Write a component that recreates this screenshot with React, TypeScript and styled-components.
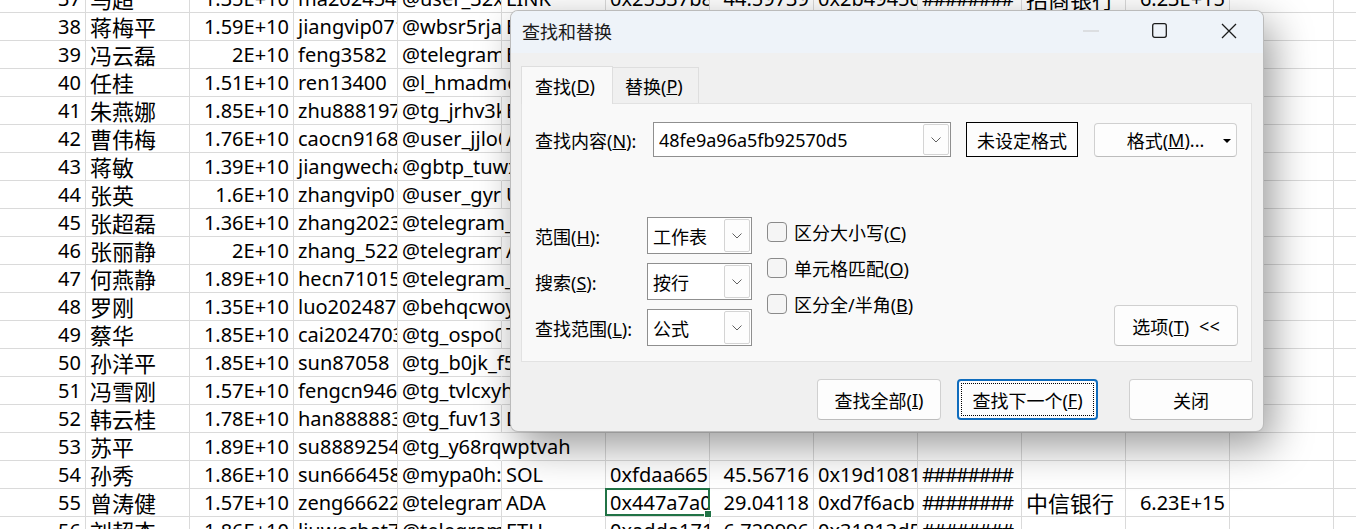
import styled, { createGlobalStyle, css } from "styled-components";

const GlobalStyle = createGlobalStyle`
  html, body {
    margin: 0;
    padding: 0;
    background: #fff;
    overflow: hidden;
  }
  * {
    box-sizing: border-box;
  }
`;

const SHEET_FONT = `"Noto Sans", "Noto Sans CJK SC", sans-serif`;
const UI_FONT = `"Noto Sans", "Noto Sans CJK SC", sans-serif`;

// column alignment / script of the worksheet, A..N
const RIGHT_COLS = [0, 2, 7, 11];
const CJK_COLS = [1, 10];
const HASH_COL = 9;

const ROWS: string[][] = [
  ["37", "马超", "1.35E+10", "ma2024546", "@user_32xm", "LINK", "0x25337b8e", "44.59739", "0x2b4945c1", "########", "招商银行", "6.23E+15"],
  ["38", "蒋梅平", "1.59E+10", "jiangvip0712", "@wbsr5rjab", "ETH", "0x9c1f2a7d", "12.80451", "0x5e8a0c3f", "########", "工商银行", "6.22E+15"],
  ["39", "冯云磊", "2E+10", "feng3582", "@telegram_fy", "BTC", "0x7a03be19", "3.518042", "0x0d6f21ab", "########", "建设银行", "6.22E+15"],
  ["40", "任桂", "1.51E+10", "ren13400", "@l_hmadmqz", "", "0x41cc90e2", "27.33105", "0x8b27fd04", "########", "农业银行", "6.23E+15"],
  ["41", "朱燕娜", "1.85E+10", "zhu8881979", "@tg_jrhv3kp", "ETH", "0x6e2d7b51", "8.904127", "0x3f91a6c8", "########", "中国银行", "6.21E+15"],
  ["42", "曹伟梅", "1.76E+10", "caocn91688", "@user_jjlo0x", "ADA", "0xb5f0c7a3", "31.60287", "0x27de5b90", "########", "交通银行", "6.22E+15"],
  ["43", "蒋敏", "1.39E+10", "jiangwechat", "@gbtp_tuwx", "", "0x0c8e4f6d", "19.45072", "0xa61b3e27", "########", "招商银行", "6.23E+15"],
  ["44", "张英", "1.6E+10", "zhangvip01", "@user_gyr", "USDT", "0x93a7d215", "40.12986", "0x5c04e8bf", "########", "工商银行", "6.22E+15"],
  ["45", "张超磊", "1.36E+10", "zhang2023x", "@telegram_zc", "", "0x2f6b91c0", "5.847301", "0xe39a7d42", "########", "建设银行", "6.22E+15"],
  ["46", "张丽静", "2E+10", "zhang_5221", "@telegram", "ADA", "0xd41e08a9", "22.96514", "0x18c5f3e6", "########", "中信银行", "6.23E+15"],
  ["47", "何燕静", "1.89E+10", "hecn710159", "@telegram_hy", "", "0x5b7f2c38", "36.07742", "0x74e0a9d1", "########", "农业银行", "6.23E+15"],
  ["48", "罗刚", "1.35E+10", "luo202487", "@behqcwoy", "", "0x8e19a4f7", "14.38265", "0x0b6c2d95", "########", "中国银行", "6.21E+15"],
  ["49", "蔡华", "1.85E+10", "cai2024703", "@tg_ospo0e", "TRX", "0xc2d65e1b", "9.271638", "0x6a8f0b34", "########", "交通银行", "6.22E+15"],
  ["50", "孙洋平", "1.85E+10", "sun87058", "@tg_b0jk_f5m", "", "0x17ab4c9e", "48.91520", "0x9d3e72a0", "########", "招商银行", "6.23E+15"],
  ["51", "冯雪刚", "1.57E+10", "fengcn946", "@tg_tvlcxyhq", "", "0xf08c3d62", "2.645098", "0x41b7e5c9", "########", "工商银行", "6.22E+15"],
  ["52", "韩云桂", "1.78E+10", "han8888833", "@tg_fuv13", "DOT", "0x6d94b0a5", "17.52863", "0xc85f1e07", "########", "建设银行", "6.22E+15"],
  ["53", "苏平", "1.89E+10", "su8889254", "@tg_y68rqwptvah", "", "", "", "", "", "", ""],
  ["54", "孙秀", "1.86E+10", "sun6664588", "@mypa0h:s", "SOL", "0xfdaa665", "45.56716", "0x19d1081a", "########", "", ""],
  ["55", "曾涛健", "1.57E+10", "zeng666221", "@telegram", "ADA", "0x447a7a0c", "29.04118", "0xd7f6acb", "########", "中信银行", "6.23E+15"],
  ["56", "刘超杰", "1.86E+10", "liuwechat7", "@telegram", "ETH", "0xadda171", "6.729996", "0x31813d5e", "########", "", ""],
];

const COLS = 14;
const ACTIVE = { row: 18, col: 6 };

const Screen = styled.div`
  position: relative;
  width: 1356px;
  height: 529px;
  overflow: hidden;
  background: #fff;
`;

const Sheet = styled.div`
  margin-top: -15px;
  display: grid;
  grid-template-columns: 86px repeat(13, 104px);
  grid-auto-rows: 28px;
  font-family: ${SHEET_FONT};
  color: #000;
`;

const Cell = styled.div<{ $spill?: boolean; $active?: boolean }>`
  position: relative;
  border-right: 1px solid #dadada;
  border-bottom: 1px solid #dadada;
  ${(p) =>
    p.$spill &&
    css`
      border-right-color: transparent;
      z-index: 1;
    `}
  ${(p) =>
    p.$active &&
    css`
      z-index: 2;
      &::after {
        content: "";
        position: absolute;
        top: -1px;
        left: -1px;
        right: -1px;
        bottom: 0;
        border: 2px solid #217346;
      }
      &::before {
        content: "";
        position: absolute;
        right: -3px;
        bottom: -2px;
        width: 6px;
        height: 6px;
        background: #217346;
        border: 1px solid #fff;
        z-index: 1;
      }
    `}
`;

const CellText = styled.div<{ $right?: boolean; $cjk?: boolean; $spill?: boolean; $hash?: boolean }>`
  height: 100%;
  padding: 0 4px;
  line-height: 28px;
  white-space: nowrap;
  overflow: ${(p) => (p.$spill ? "visible" : "hidden")};
  text-align: ${(p) => (p.$right ? "right" : "left")};
  font-size: ${(p) => (p.$cjk ? "22px" : "20px")};
  letter-spacing: ${(p) => (p.$hash ? "-1.6px" : "normal")};
`;

/* ---------- dialog ---------- */

const Dialog = styled.div`
  position: absolute;
  left: 510px;
  top: 10px;
  width: 754px;
  height: 422px;
  display: flex;
  flex-direction: column;
  border: 1px solid rgba(0, 0, 0, 0.22);
  border-radius: 8px;
  overflow: hidden;
  background: #f0f0f0;
  box-shadow: 8px 14px 40px rgba(0, 0, 0, 0.4);
  font-family: ${UI_FONT};
  font-size: 18px;
  color: #000;
  z-index: 10;
`;

const TitleBar = styled.div`
  display: flex;
  align-items: center;
  height: 42px;
  padding: 0 0 3px 11px;
  background: #eef3f9;
`;

const Title = styled.div`
  flex: 1;
  color: #1a1a1a;
`;

const WinButton = styled.div`
  display: flex;
  align-items: center;
  justify-content: center;
  width: 69px;
  height: 39px;
`;

const Body = styled.div`
  flex: 1;
  padding: 13px 11px 0 10px;
`;

const Tabs = styled.div`
  display: flex;
  align-items: flex-end;
  height: 37px;
`;

const Tab = styled.div<{ $active?: boolean }>`
  position: relative;
  display: flex;
  align-items: center;
  border: 1px solid #dedede;
  border-bottom: none;
  ${(p) =>
    p.$active
      ? css`
          width: 92px;
          height: 38px;
          margin-bottom: -1px;
          padding-left: 13px;
          background: #f9f9f9;
          z-index: 1;
        `
      : css`
          width: 86px;
          height: 36px;
          padding-left: 12px;
          border-left: none;
          background: #f0f0f0;
        `}
`;

const Panel = styled.div`
  height: 259px;
  padding: 18px 13px 0 13px;
  background: #f9f9f9;
  border: 1px solid #e2e2e2;
`;

const FindRow = styled.div`
  display: flex;
  align-items: center;
  height: 35px;
`;

const Label = styled.div<{ $width: number }>`
  width: ${(p) => p.$width}px;
  flex-shrink: 0;
`;

const Combo = styled.div<{ $width: number; $height: number }>`
  display: flex;
  align-items: center;
  width: ${(p) => p.$width}px;
  height: ${(p) => p.$height}px;
  padding: 1px 1px 1px 5px;
  background: #fff;
  border: 1px solid #8f8f8f;
  flex-shrink: 0;
`;

const ComboValue = styled.div`
  flex: 1;
  white-space: nowrap;
  overflow: hidden;
`;

const ComboDrop = styled.div`
  display: flex;
  align-items: center;
  justify-content: center;
  width: 26px;
  height: 100%;
  border: 1px solid #d4d4d4;
  border-radius: 2px;
  background: #fdfdfd;
`;

const FormatState = styled.div`
  display: flex;
  align-items: center;
  justify-content: center;
  width: 112px;
  height: 35px;
  margin-left: 15px;
  border: 1px solid #000;
  background: #fdfdfd;
`;

const Button = styled.div<{ $width: number; $height?: number; $focused?: boolean; $gap?: number }>`
  position: relative;
  display: flex;
  align-items: center;
  justify-content: center;
  width: ${(p) => p.$width}px;
  height: ${(p) => p.$height ?? 41}px;
  margin-left: ${(p) => p.$gap ?? 0}px;
  flex-shrink: 0;
  background: #fdfdfd;
  border: 1px solid #d0d0d0;
  border-bottom-color: #bdbdbd;
  border-radius: 4px;
  ${(p) =>
    p.$focused &&
    css`
      border: 2px solid #0f6cbd;
      &::after {
        content: "";
        position: absolute;
        inset: 2px;
        border: 1px dotted #000;
      }
    `}
`;

const FormatButton = styled(Button)`
  &::after {
    content: "";
    position: absolute;
    right: 5px;
    top: 15px;
    border-left: 4px solid transparent;
    border-right: 4px solid transparent;
    border-top: 4px solid #000;
  }
`;

const Options = styled.div`
  display: flex;
  margin-top: 60px;
`;

const OptionGrid = styled.div`
  display: grid;
  grid-template-columns: 112px 105px;
  grid-auto-rows: 37px;
  row-gap: 9px;
  align-items: center;
`;

const Checks = styled.div`
  display: flex;
  flex-direction: column;
  margin: -3px 0 0 15px;
`;

const CheckRow = styled.div`
  display: flex;
  align-items: center;
  gap: 7px;
  height: 36px;
`;

const Box = styled.div`
  width: 20px;
  height: 20px;
  border: 1px solid #8a8a8a;
  border-radius: 4px;
  background: #f5f5f5;
`;

const OptionsButton = styled(Button)`
  margin-left: auto;
  align-self: flex-end;
  gap: 10px;
`;

const Actions = styled.div`
  display: flex;
  justify-content: flex-end;
  margin: 17px -1px 0 0;
`;

const Chevron = () => (
  <svg width="10" height="6" viewBox="0 0 10 6">
    <path d="M0.5 0.5 L5 5 L9.5 0.5" fill="none" stroke="#616161" strokeWidth="1" />
  </svg>
);

const Select = ({ value }: { value: string }) => (
  <Combo $width={105} $height={37}>
    <ComboValue>{value}</ComboValue>
    <ComboDrop>
      <Chevron />
    </ComboDrop>
  </Combo>
);

export default function App() {
  return (
    <Screen>
      <GlobalStyle />
      <Sheet>
        {ROWS.map((row, r) =>
          Array.from({ length: COLS }, (_, c) => {
            const text = row[c] ?? "";
            const right = RIGHT_COLS.includes(c);
            const next = row[c + 1] ?? "";
            const spill = !!text && !right && !next && c < HASH_COL;
            const active = r === ACTIVE.row && c === ACTIVE.col;
            return (
              <Cell key={`${r}-${c}`} $spill={spill} $active={active}>
                <CellText
                  $right={right}
                  $cjk={CJK_COLS.includes(c)}
                  $spill={spill}
                  $hash={c === HASH_COL}
                >
                  {text}
                </CellText>
              </Cell>
            );
          })
        )}
      </Sheet>

      <Dialog>
        <TitleBar>
          <Title>查找和替换</Title>
          <WinButton>
            <svg width="16" height="2" viewBox="0 0 16 2">
              <rect x="0" y="0.5" width="16" height="1" fill="#c9c9c9" />
            </svg>
          </WinButton>
          <WinButton>
            <svg width="15" height="15" viewBox="0 0 15 15">
              <rect x="0.7" y="0.7" width="13.6" height="13.6" rx="2" fill="none" stroke="#1b1b1b" strokeWidth="1.3" />
            </svg>
          </WinButton>
          <WinButton>
            <svg width="16" height="16" viewBox="0 0 16 16">
              <path d="M1 1 L15 15 M15 1 L1 15" stroke="#1b1b1b" strokeWidth="1.3" />
            </svg>
          </WinButton>
        </TitleBar>

        <Body>
          <Tabs>
            <Tab $active>
              查找(<u>D</u>)
            </Tab>
            <Tab>
              替换(<u>P</u>)
            </Tab>
          </Tabs>

          <Panel>
            <FindRow>
              <Label $width={118}>
                查找内容(<u>N</u>):
              </Label>
              <Combo $width={298} $height={35}>
                <ComboValue>48fe9a96a5fb92570d5</ComboValue>
                <ComboDrop>
                  <Chevron />
                </ComboDrop>
              </Combo>
              <FormatState>未设定格式</FormatState>
              <FormatButton $width={143} $height={34} $gap={16}>
                格式(<u>M</u>)...
              </FormatButton>
            </FindRow>

            <Options>
              <OptionGrid>
                <Label $width={112}>
                  范围(<u>H</u>):
                </Label>
                <Select value="工作表" />
                <Label $width={112}>
                  搜索(<u>S</u>):
                </Label>
                <Select value="按行" />
                <Label $width={112}>
                  查找范围(<u>L</u>):
                </Label>
                <Select value="公式" />
              </OptionGrid>

              <Checks>
                <CheckRow>
                  <Box />
                  <span>
                    区分大小写(<u>C</u>)
                  </span>
                </CheckRow>
                <CheckRow>
                  <Box />
                  <span>
                    单元格匹配(<u>O</u>)
                  </span>
                </CheckRow>
                <CheckRow>
                  <Box />
                  <span>
                    区分全/半角(<u>B</u>)
                  </span>
                </CheckRow>
              </Checks>

              <OptionsButton $width={124}>
                <span>
                  选项(<u>T</u>)
                </span>
                <span>&lt;&lt;</span>
              </OptionsButton>
            </Options>
          </Panel>

          <Actions>
            <Button $width={124}>
              查找全部(<u>I</u>)
            </Button>
            <Button $width={141} $gap={16} $focused>
              查找下一个(<u>F</u>)
            </Button>
            <Button $width={124} $gap={31}>
              关闭
            </Button>
          </Actions>
        </Body>
      </Dialog>
    </Screen>
  );
}
